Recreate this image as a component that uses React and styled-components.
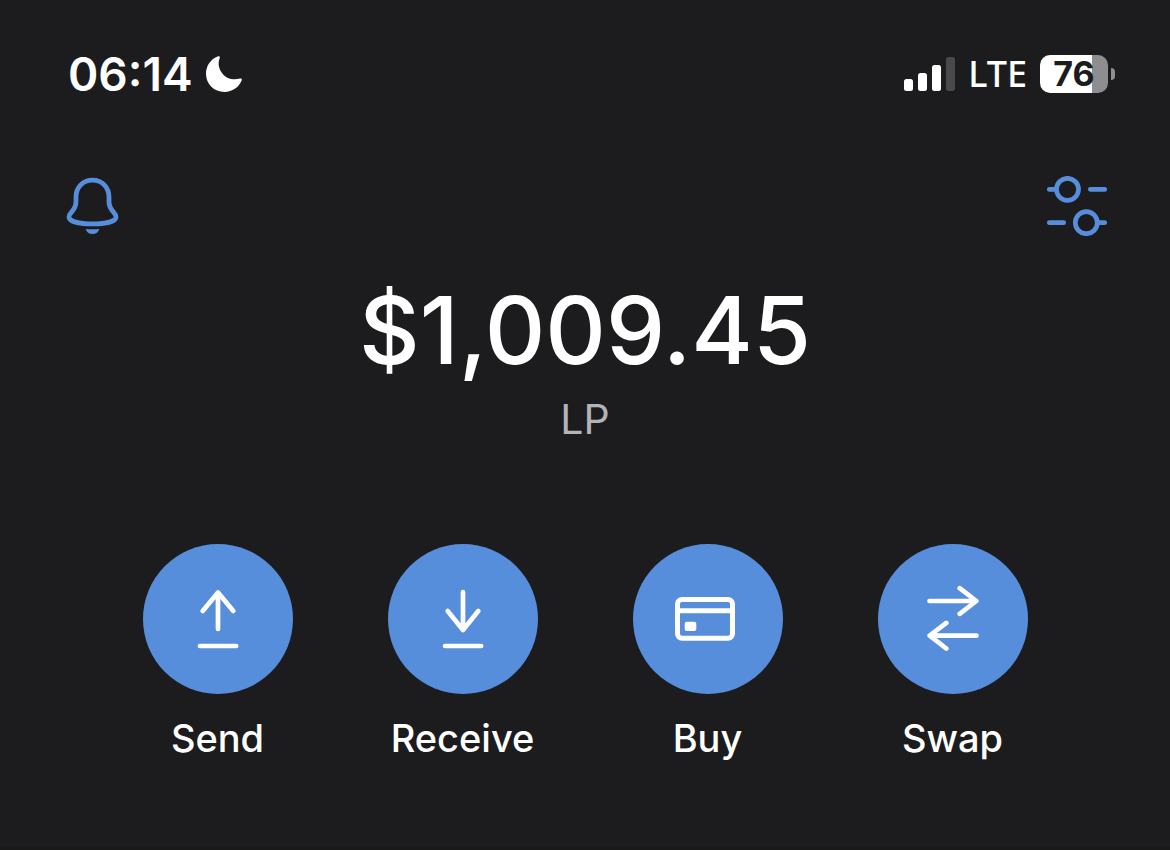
import React from 'react';
import styled, { createGlobalStyle } from 'styled-components';

const GlobalStyle = createGlobalStyle`
  *, *::before, *::after {
    box-sizing: border-box;
  }
  body {
    margin: 0;
    background: #1c1c1e;
    color: #fff;
    font-family: Inter, 'Liberation Sans', sans-serif;
  }
`;

const WalletStyles = styled.main`
  min-height: 100vh;
  padding-top: 48px;
  border-bottom: 3px solid #19191a;
`;

const StatusBar = styled.header`
  display: flex;
  justify-content: space-between;
  align-items: center;
  height: 52px;
  padding: 0 55px 0 68px;
`;

const StatusGroup = styled.div`
  display: flex;
  align-items: center;
  gap: 13px;
`;

const Clock = styled.time`
  font-size: 46px;
  line-height: 52px;
  font-weight: 600;
`;

const Network = styled.span`
  font-family: 'Noto Sans', 'Open Sans', sans-serif;
  font-size: 36px;
  line-height: 52px;
  font-weight: 500;
`;

const Battery = styled.div`
  display: flex;
  align-items: center;
  gap: 3px;
  &::after {
    content: '';
    width: 4px;
    height: 12px;
    background: #8e8e90;
    border-radius: 0 4px 4px 0;
  }
`;

const BatteryLevel = styled.div`
  width: 68px;
  height: 38px;
  border-radius: 10px;
  background: linear-gradient(
    to right,
    #fff ${props => props.$level}%,
    #8e8e90 ${props => props.$level}%
  );
  color: #1c1c1e;
  font-size: 34px;
  line-height: 38px;
  font-weight: 700;
  text-align: center;
`;

const Toolbar = styled.nav`
  display: flex;
  justify-content: space-between;
  align-items: center;
  padding: 0 63px 0 66px;
  margin-top: 76px;
`;

const IconButton = styled.button`
  padding: 0;
  border: none;
  background: none;
  color: #568edc;
  cursor: pointer;
  svg {
    display: block;
  }
`;

const Balance = styled.section`
  margin-top: 36px;
  text-align: center;
`;

const Amount = styled.h1`
  margin: 0;
  font-size: 94px;
  line-height: 116px;
  font-weight: 500;
`;

const Account = styled.p`
  margin: 7px 0 0;
  color: #b4b4b6;
  font-size: 41px;
  line-height: 48px;
`;

const Actions = styled.section`
  display: grid;
  grid-template-columns: repeat(4, 1fr);
  justify-items: center;
  padding: 0 95px;
  margin-top: 101px;
`;

const ActionButton = styled.button`
  display: flex;
  flex-direction: column;
  align-items: center;
  gap: 20px;
  padding: 0;
  border: none;
  background: none;
  color: #fff;
  font-family: inherit;
  font-size: 38px;
  line-height: 48px;
  font-weight: 500;
  cursor: pointer;
`;

const Circle = styled.span`
  display: flex;
  align-items: center;
  justify-content: center;
  width: 150px;
  height: 150px;
  border-radius: 50%;
  background: #568edc;
`;

const Moon = () => (
  <svg width="36" height="36" viewBox="0 0 36 36" fill="#fff" aria-hidden="true">
    <path d="M11.500 .6C13.300 -.3 14.300 .4 13.700 2C12.500 5 12.300 8.500 13.200 11.500C15.100 18.200 20.700 22.900 27.500 23.300C29.800 23.400 32 23.100 34 22.500C35.600 22.100 36.200 23 35.600 24.600C32.800 31.500 26.300 36 18.500 36C8 36 0 28.200 0 17.800C0 10 4.500 3.600 11.500 .6Z" />
  </svg>
);

const Signal = () => (
  <svg width="51" height="34" viewBox="0 0 51 34" fill="#fff" role="img" aria-label="Signal">
    <rect x="0" y="22" width="9" height="12" rx="2.500" />
    <rect x="14" y="16" width="9" height="18" rx="2.500" />
    <rect x="28" y="8" width="9" height="26" rx="2.500" />
    <rect x="42" y="0" width="9" height="34" rx="2.500" fill="#49494b" />
  </svg>
);

const Bell = () => (
  <svg width="54" height="60" viewBox="0 0 54 60" fill="none" aria-hidden="true">
    <path
      d="M26.500 4.200C16.500 4.200 10 11.500 10 21V25.500C10 30 8.700 32.500 5.700 35.800C3.700 38 3 39.200 3 41C3 45.300 13 47.900 26.500 47.900S50 45.300 50 41C50 39.200 49.300 38 47.300 35.800C44.300 32.500 43 30 43 25.500V21C43 11.500 36.500 4.200 26.500 4.200Z"
      stroke="currentColor"
      strokeWidth="4.800"
    />
    <path d="M19.700 53C24 53.400 29 53.400 33.300 53C32.500 56 30 58 26.500 58S20.500 56 19.700 53Z" fill="currentColor" />
  </svg>
);

const Sliders = () => (
  <svg
    width="60"
    height="60"
    viewBox="0 0 60 60"
    fill="none"
    stroke="currentColor"
    strokeWidth="4.700"
    strokeLinecap="round"
    aria-hidden="true"
  >
    <circle cx="20.500" cy="13.300" r="11" />
    <path d="M2.300 13.300H9M43.300 13.300H57.700" />
    <circle cx="39.300" cy="46.700" r="11" />
    <path d="M2.300 46.700H16.700M51 46.700H57.700" />
  </svg>
);

const ActionIcon = ({ children }) => (
  <svg
    width="68"
    height="68"
    viewBox="0 0 68 68"
    fill="none"
    stroke="#fff"
    strokeWidth="4.700"
    strokeLinecap="round"
    strokeLinejoin="round"
    aria-hidden="true"
  >
    {children}
  </svg>
);

const actions = [
  { label: 'Send', icon: <path d="M34 44V7.500M18.700 26L34 7.500L49.300 26M16 61H52.200" /> },
  { label: 'Receive', icon: <path d="M34 7.200V45M18.700 26L34 45L49.300 26M16 61H52.200" /> },
  {
    label: 'Buy',
    icon: (
      <>
        <rect x="3.500" y="14.500" width="55" height="38.700" rx="4.500" strokeWidth="5" />
        <path d="M4 25.700H58" strokeWidth="5" />
        <rect x="10.700" y="36.700" width="11.600" height="9.300" rx="2" fill="#fff" stroke="none" />
      </>
    ),
  },
  {
    label: 'Swap',
    icon: (
      <path d="M10.500 16H57.300M40.700 3.200L57.300 16L40.700 28.800M57.500 50.700H10.700M27.300 37.900L10.700 50.700L27.300 63.500" />
    ),
  },
];

export default () => (
  <WalletStyles>
    <GlobalStyle />
    <StatusBar>
      <StatusGroup>
        <Clock>06:14</Clock>
        <Moon />
      </StatusGroup>
      <StatusGroup>
        <Signal />
        <Network>LTE</Network>
        <Battery>
          <BatteryLevel $level={76}>76</BatteryLevel>
        </Battery>
      </StatusGroup>
    </StatusBar>
    <Toolbar>
      <IconButton type="button" aria-label="Notifications">
        <Bell />
      </IconButton>
      <IconButton type="button" aria-label="Settings">
        <Sliders />
      </IconButton>
    </Toolbar>
    <Balance>
      <Amount>$1,009.45</Amount>
      <Account>LP</Account>
    </Balance>
    <Actions>
      {actions.map(({ label, icon }) => (
        <ActionButton type="button" key={label}>
          <Circle>
            <ActionIcon>{icon}</ActionIcon>
          </Circle>
          {label}
        </ActionButton>
      ))}
    </Actions>
  </WalletStyles>
);
